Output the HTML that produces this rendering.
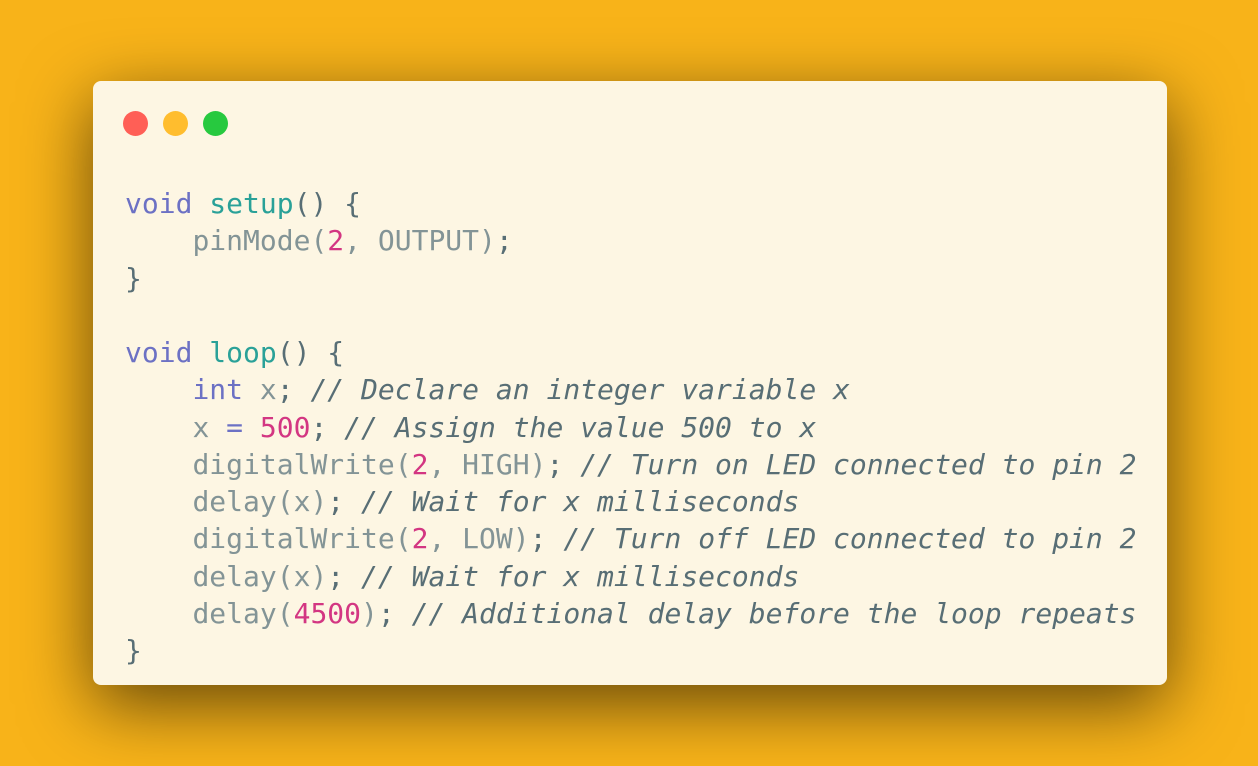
<!DOCTYPE html>
<html><head><meta charset="utf-8"><style>
html,body{margin:0;padding:0}
body{width:1258px;height:766px;background:#f8b319;position:relative;overflow:hidden}
.card{position:absolute;left:93px;top:81px;width:1074px;height:604px;background:#fdf6e3;border-radius:8px;box-shadow:0 20px 70px rgba(0,0,0,.6)}
.dot{position:absolute;top:30px;width:25px;height:25px;border-radius:50%}
pre{position:absolute;left:32px;top:104px;margin:0;font-family:"DejaVu Sans Mono","Liberation Mono",monospace;font-size:28px;line-height:37.25px;color:#586e75}
.k{color:#6c71c4}.f{color:#2aa198}.n{color:#d33682}.g{color:#839496}.c{color:#586e75;font-style:italic}
</style></head><body>
<div class="card">
<div class="dot" style="left:30px;background:#ff5f56"></div>
<div class="dot" style="left:70px;background:#ffbd2e"></div>
<div class="dot" style="left:110px;background:#27c93f"></div>
<pre><span class="k">void</span> <span class="f">setup</span>() {
    <span class="g">pinMode(</span><span class="n">2</span><span class="g">, OUTPUT)</span>;
}

<span class="k">void</span> <span class="f">loop</span>() {
    <span class="k">int</span> <span class="g">x</span>; <span class="c">// Declare an integer variable x</span>
    <span class="g">x</span> <span class="k">=</span> <span class="n">500</span>; <span class="c">// Assign the value 500 to x</span>
    <span class="g">digitalWrite(</span><span class="n">2</span><span class="g">, HIGH)</span>; <span class="c">// Turn on LED connected to pin 2</span>
    <span class="g">delay(x)</span>; <span class="c">// Wait for x milliseconds</span>
    <span class="g">digitalWrite(</span><span class="n">2</span><span class="g">, LOW)</span>; <span class="c">// Turn off LED connected to pin 2</span>
    <span class="g">delay(x)</span>; <span class="c">// Wait for x milliseconds</span>
    <span class="g">delay(</span><span class="n">4500</span><span class="g">)</span>; <span class="c">// Additional delay before the loop repeats</span>
}</pre>
</div>
</body></html>
